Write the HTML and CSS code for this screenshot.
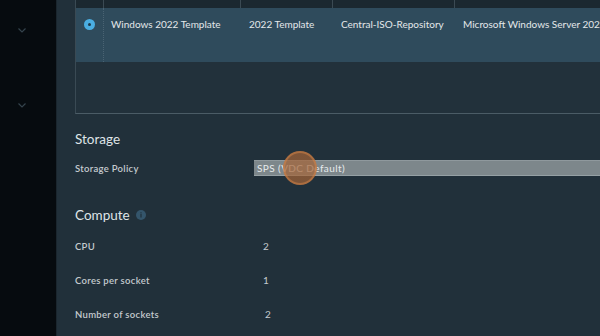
FILE: index.html
```html
<!DOCTYPE html>
<html>
<head>
<meta charset="utf-8">
<link rel="stylesheet" href="styles.css">
</head>
<body>
<div class="app">
  <aside class="sidebar">
    <div class="chev chev-1"><svg width="8" height="5" viewBox="0 0 8 5"><path d="M0.5 0.5 L4 4 L7.5 0.5" fill="none" stroke="#34434c" stroke-width="1.2"/></svg></div>
    <div class="chev chev-2"><svg width="8" height="5" viewBox="0 0 8 5"><path d="M0.5 0.5 L4 4 L7.5 0.5" fill="none" stroke="#34434c" stroke-width="1.2"/></svg></div>
  </aside>
  <main class="main">
    <div class="grid">
      <div class="grid-head">
        <div class="hc c0"></div>
        <div class="hc c1"></div>
        <div class="hc c2"></div>
        <div class="hc c3"></div>
        <div class="hc c4"></div>
      </div>
      <div class="grid-row selected">
        <div class="cell c0"><span class="radio"><span class="dot"></span></span></div>
        <div class="cell c1">Windows 2022 Template</div>
        <div class="cell c2">2022 Template</div>
        <div class="cell c3">Central-ISO-Repository</div>
        <div class="cell c4">Microsoft Windows Server 2022</div>
      </div>
      <div class="grid-empty"></div>
    </div>

    <section class="section storage">
      <h2 class="sec-title">Storage</h2>
      <div class="field">
        <div class="label">Storage Policy</div>
        <div class="select">SPS (VDC Default)<span class="cursor"></span></div>
      </div>
    </section>

    <section class="section compute">
      <h2 class="sec-title">Compute <span class="info"><svg width="10" height="10" viewBox="0 0 10 10"><circle cx="5" cy="5" r="5" fill="#34556b"/><rect x="4.4" y="4" width="1.2" height="3.5" fill="#21303a"/><rect x="4.4" y="2.3" width="1.2" height="1.1" fill="#21303a"/></svg></span></h2>
      <div class="kv"><div class="label">CPU</div><div class="val">2</div></div>
      <div class="kv"><div class="label">Cores per socket</div><div class="val">1</div></div>
      <div class="kv"><div class="label">Number of sockets</div><div class="val v2">2</div></div>
    </section>
  </main>
</div>
</body>
</html>
```

FILE: styles.css
```css
html, body {
  margin: 0;
  padding: 0;
  width: 600px;
  height: 336px;
  overflow: hidden;
  background: #21303a;
  font-family: "Lato", "Noto Sans", sans-serif;
  color: #d7dcdf;
}
.app {
  display: flex;
  height: 336px;
}
.sidebar {
  width: 56px;
  flex: none;
  background: #060b0f;
  border-right: 1px solid #1a262e;
  display: flex;
  flex-direction: column;
  align-items: center;
}
.chev {
  width: 8px;
  height: 5px;
  line-height: 0;
  margin-left: -12px;
}
.chev-1 { margin-top: 27px; }
.chev-2 { margin-top: 70px; }
.main {
  flex: 1;
  padding-left: 18px;
  overflow: hidden;
  min-width: 0;
}
.grid {
  width: 600px;
  border-left: 1px solid #3a4a54;
  border-bottom: 1px solid #4b5c66;
  height: 113px;
  display: flex;
  flex-direction: column;
}
.grid-head {
  height: 8px;
  background: #1b2830;
  display: flex;
}
.hc {
  border-right: 1px solid #3b4a53;
  height: 8px;
  box-sizing: border-box;
}
.c0 { width: 28px; flex: none; }
.c1 { width: 137px; flex: none; }
.c2 { width: 92px; flex: none; }
.c3 { width: 122px; flex: none; }
.c4 { width: 200px; flex: none; }
.grid-row {
  display: flex;
  height: 54px;
  background: #2f4b5c;
  font-size: 10px;
  color: #e4e8ea;
}
.cell {
  padding-top: 10px;
  padding-left: 7px;
  box-sizing: border-box;
  white-space: nowrap;
  line-height: 13px;
  overflow: hidden;
}
.cell.c0 {
  border-right: 1px dotted #4a6373;
  padding-left: 8px;
  padding-top: 10px;
}
.cell.c2 { padding-left: 8px; }
.cell.c3 { padding-left: 8px; }
.cell.c4 { padding-left: 8px; overflow: visible; }
.radio {
  display: flex;
  align-items: center;
  justify-content: center;
  width: 11px;
  height: 11px;
  border-radius: 50%;
  background: #4aaee2;
  margin-top: 1px;
}
.dot {
  width: 3px;
  height: 3px;
  border-radius: 50%;
  background: #1c3a4c;
}
.grid-empty {
  flex: 1;
  background: #22313b;
}
.section {
  display: flex;
  flex-direction: column;
}
.sec-title {
  margin: 0;
  font-weight: 400;
  font-size: 13.5px;
  color: #dfe4e7;
  line-height: 16px;
  display: flex;
  align-items: center;
  gap: 6px;
}
.storage .sec-title { margin-top: 17px; }
.field {
  display: flex;
  align-items: center;
  margin-top: 14px;
  height: 14px;
}
.label {
  width: 179px;
  flex: none;
  font-size: 9.5px;
  letter-spacing: 0.3px;
  color: #c5cbcf;
  font-weight: 600;
}
.select {
  position: relative;
  flex: 1;
  height: 14px;
  line-height: 14px;
  background: #7d878b;
  border-top: 1px solid #8f999d;
  border-bottom: 1px solid #95a0a4;
  color: #e6eaec;
  font-size: 10px;
  letter-spacing: 0.4px;
  padding-left: 3px;
  white-space: nowrap;
}
.cursor {
  position: absolute;
  left: 29px;
  top: -10px;
  width: 34px;
  height: 34px;
  border-radius: 50%;
  background: radial-gradient(circle, rgba(165,100,55,0.7) 0 60%, rgba(195,120,65,0.85) 64% 100%);
}
.compute .sec-title { margin-top: 32px; }
.info { line-height: 0; }
.kv {
  display: flex;
  align-items: center;
  height: 14px;
}
.compute .kv { margin-top: 20px; }
.compute .kv:nth-child(2) { margin-top: 16px; }
.val {
  font-size: 10px;
  color: #c5cbcf;
  padding-left: 9px;
}
.val.v2 { padding-left: 11px; }
```
